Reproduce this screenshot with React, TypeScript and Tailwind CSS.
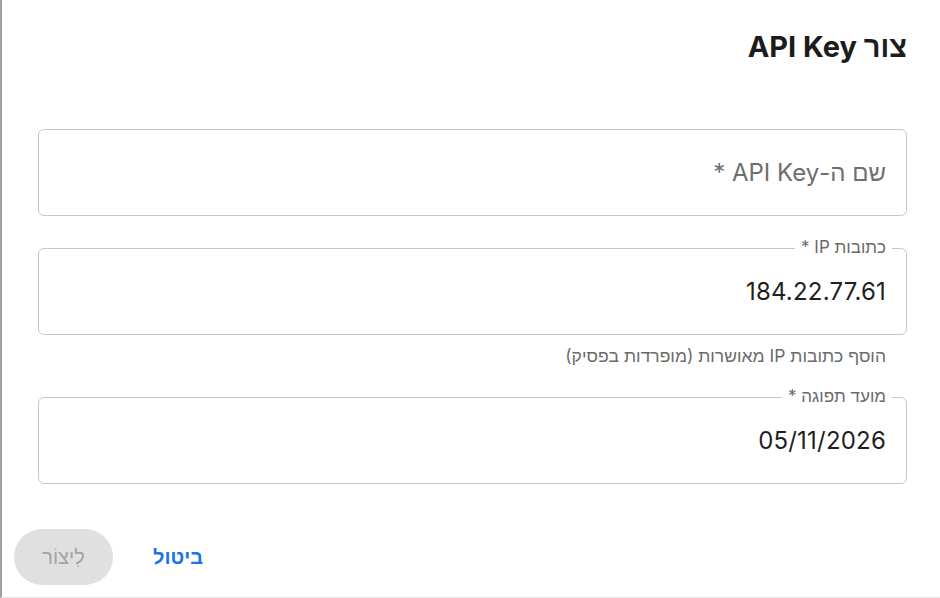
import React from "react";

function Field({
  label,
  value,
  placeholder,
}: {
  label?: string;
  value?: string;
  placeholder?: string;
}) {
  return (
    <div className="relative h-[87px] rounded-[6px] border border-[#c7c7c7] flex items-center pr-[20px] pl-[20px]">
      {label && (
        <span className="absolute -top-[13px] right-[14px] bg-white px-[6px] text-[17px] leading-[22px] text-[#6b6b6b]">
          {label}
        </span>
      )}
      {value ? (
        <span className="text-[24px] leading-[30px] text-[#1f1f1f] tracking-[0.2px]">{value}</span>
      ) : (
        <span className="text-[24px] leading-[30px] text-[#6e6e6e]">{placeholder}</span>
      )}
    </div>
  );
}

export default function App() {
  return (
    <div
      dir="rtl"
      className="w-[940px] h-[598px] bg-white border-l-2 border-l-[#a0a0a0] border-b border-b-[#e4e4e4] flex flex-col overflow-hidden"
      style={{ fontFamily: 'Inter, "Liberation Sans", "DejaVu Sans", sans-serif' }}
    >
      <div className="pr-[33px] pt-[29px] h-[36px] box-content">
        <h1 className="text-[29px] leading-[36px] font-bold text-[#1c1c1c]">צור API Key</h1>
      </div>
      <div className="pr-[33px] pl-[36px] mt-[64px] flex flex-col">
        <Field placeholder="שם ה-API Key *" />
        <div className="mt-[32px]">
          <Field label="כתובות IP *" value="184.22.77.61" />
        </div>
        <p className="mt-[9px] pr-[21px] text-[17.5px] leading-[24px] text-[#6b6b6b]">
          הוסף כתובות IP מאושרות (מופרדות בפסיק)
        </p>
        <div className="mt-[29px]">
          <Field label="מועד תפוגה *" value="05/11/2026" />
        </div>
      </div>
      <div className="mt-[45px] flex items-center justify-end pl-[12px] gap-[38px]">
        <button className="text-[20px] font-semibold text-[#1a73e8] leading-[28px] px-[2px]">
          ביטול
        </button>
        <button
          disabled
          className="h-[56px] w-[99px] rounded-full bg-[#e0e0e0] text-[20px] text-[#a3a3a3] leading-[28px]"
        >
          לִיצוֹר
        </button>
      </div>
    </div>
  );
}
